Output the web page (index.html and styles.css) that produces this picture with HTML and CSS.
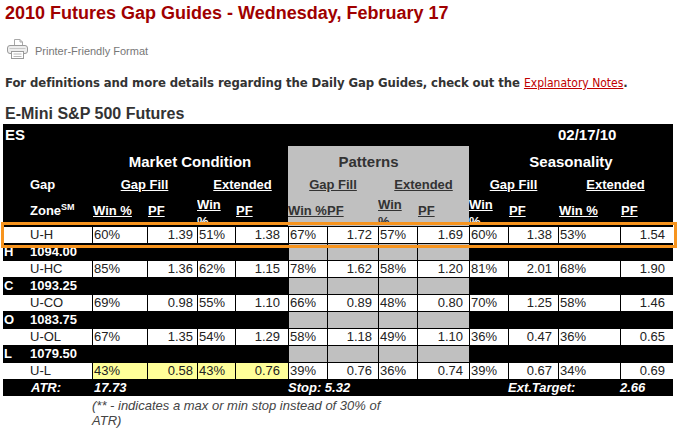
FILE: index.html
```html
<!DOCTYPE html>
<html>
<head>
<meta charset="utf-8">
<title>2010 Futures Gap Guides</title>
<link rel="stylesheet" href="styles.css">
</head>
<body>
<h1 class="title">2010 Futures Gap Guides - Wednesday, February 17</h1>
<div class="printer">
  <svg viewBox="0 0 21 20" aria-hidden="true">
    <path d="M7.5 0.5h5.5l2.5 2.5v5h-8z" fill="#fff" stroke="#a8a8a8"/>
    <path d="M13 0.5v2.5h2.5" fill="none" stroke="#a8a8a8"/>
    <rect x="0.5" y="6.5" width="20" height="8" rx="2.5" fill="#eeeeee" stroke="#9a9a9a"/>
    <path d="M2.5 9.5h16" stroke="#c8c8c8"/>
    <rect x="4.5" y="12.5" width="12" height="7" fill="#fff" stroke="#9a9a9a"/>
    <path d="M6.5 15h8M6.5 17.5h8" stroke="#b8b8b8"/>
  </svg>
  <span>Printer-Friendly Format</span>
</div>
<p class="intro">For definitions and more details regarding the Daily Gap Guides, check out the <a href="#">Explanatory Notes</a>.</p>
<h2 class="market">E-Mini S&amp;P 500 Futures</h2>
<div class="guide">
  <table class="gaps">
    <colgroup>
      <col style="width:24px"><col style="width:65px"><col style="width:55px"><col style="width:50px"><col style="width:38px"><col style="width:53px"><col style="width:39px"><col style="width:51px"><col style="width:39px"><col style="width:52px"><col style="width:39px"><col style="width:50px"><col style="width:62px"><col style="width:53px">
    </colgroup>
    <tr class="r-es">
      <td colspan="2" class="es">ES</td>
      <td colspan="10"></td>
      <td colspan="2" class="date">02/17/10</td>
    </tr>
    <tr class="r-mc">
      <td colspan="2"></td>
      <td colspan="4" class="grp">Market Condition</td>
      <td colspan="4" class="grp pat pat-title">Patterns</td>
      <td colspan="4" class="grp">Seasonality</td>
    </tr>
    <tr class="r-gf">
      <td></td>
      <td class="lbl">Gap</td>
      <td colspan="2" class="sub"><span class="u">Gap Fill</span></td>
      <td colspan="2" class="sub"><span class="u">Extended</span></td>
      <td colspan="2" class="sub pat"><span class="u">Gap Fill</span></td>
      <td colspan="2" class="sub pat"><span class="u">Extended</span></td>
      <td colspan="2" class="sub"><span class="u">Gap Fill</span></td>
      <td colspan="2" class="sub"><span class="u">Extended</span></td>
    </tr>
    <tr class="r-win">
      <td></td>
      <td class="lbl">Zone<sup>SM</sup></td>
      <td><span class="u">Win %</span></td>
      <td><span class="u">PF</span></td>
      <td class="w2"><div class="wrap"><span class="u">Win<br>%</span></div></td>
      <td><span class="u">PF</span></td>
      <td class="pat flush"><span class="u">Win %</span></td>
      <td class="pat flush"><span class="u">PF</span></td>
      <td class="pat w2"><div class="wrap"><span class="u">Win<br>%</span></div></td>
      <td class="pat"><span class="u">PF</span></td>
      <td class="w2"><div class="wrap"><span class="u">Win<br>%</span></div></td>
      <td><span class="u">PF</span></td>
      <td><span class="u">Win %</span></td>
      <td><span class="u">PF</span></td>
    </tr>
    <tr class="d">
      <td colspan="2" class="zone">U-H</td>
      <td>60%</td><td class="n n4">1.39</td><td>51%</td><td class="n n8">1.38</td>
      <td>67%</td><td class="n">1.72</td><td>57%</td><td class="n">1.69</td>
      <td>60%</td><td class="n">1.38</td><td>53%</td><td class="n n8">1.54</td>
    </tr>
    <tr class="lv">
      <td class="k">H</td><td class="kv">1094.00</td><td colspan="4"></td>
      <td class="g"></td><td class="g"></td><td class="g"></td><td class="g"></td>
      <td colspan="4"></td>
    </tr>
    <tr class="d">
      <td colspan="2" class="zone">U-HC</td>
      <td>85%</td><td class="n n4">1.36</td><td>62%</td><td class="n n8">1.15</td>
      <td>78%</td><td class="n">1.62</td><td>58%</td><td class="n">1.20</td>
      <td>81%</td><td class="n">2.01</td><td>68%</td><td class="n n8">1.90</td>
    </tr>
    <tr class="lv">
      <td class="k">C</td><td class="kv">1093.25</td><td colspan="4"></td>
      <td class="g"></td><td class="g"></td><td class="g"></td><td class="g"></td>
      <td colspan="4"></td>
    </tr>
    <tr class="d">
      <td colspan="2" class="zone">U-CO</td>
      <td>69%</td><td class="n n4">0.98</td><td>55%</td><td class="n n8">1.10</td>
      <td>66%</td><td class="n">0.89</td><td>48%</td><td class="n">0.80</td>
      <td>70%</td><td class="n">1.25</td><td>58%</td><td class="n n8">1.46</td>
    </tr>
    <tr class="lv">
      <td class="k">O</td><td class="kv">1083.75</td><td colspan="4"></td>
      <td class="g"></td><td class="g"></td><td class="g"></td><td class="g"></td>
      <td colspan="4"></td>
    </tr>
    <tr class="d">
      <td colspan="2" class="zone">U-OL</td>
      <td>67%</td><td class="n n4">1.35</td><td>54%</td><td class="n n8">1.29</td>
      <td>58%</td><td class="n">1.18</td><td>49%</td><td class="n">1.10</td>
      <td>36%</td><td class="n">0.47</td><td>36%</td><td class="n n8">0.65</td>
    </tr>
    <tr class="lv">
      <td class="k">L</td><td class="kv">1079.50</td><td colspan="4"></td>
      <td class="g"></td><td class="g"></td><td class="g"></td><td class="g"></td>
      <td colspan="4"></td>
    </tr>
    <tr class="d">
      <td colspan="2" class="zone">U-L</td>
      <td class="hl">43%</td><td class="n n4 hl">0.58</td><td class="hl">43%</td><td class="n n8 hl">0.76</td>
      <td>39%</td><td class="n">0.76</td><td>36%</td><td class="n">0.74</td>
      <td>39%</td><td class="n">0.67</td><td>34%</td><td class="n n8">0.69</td>
    </tr>
    <tr class="atr">
      <td></td>
      <td class="lbl">ATR:</td>
      <td colspan="4" class="v">17.73</td>
      <td colspan="4">Stop: 5.32</td>
      <td></td>
      <td colspan="2">Ext.Target:</td>
      <td>2.66</td>
    </tr>
  </table>
  <div class="focus"></div>
</div>
<p class="note">(** - indicates a max or min stop instead of 30% of ATR)</p>
</body>
</html>
```

FILE: styles.css
```css
* {
  box-sizing: border-box;
}

body {
  margin: 0;
  padding: 3px 0 0 3px;
  background: #fff;
  color: #333;
  font-family: "Liberation Sans", Arial, sans-serif;
}

.title {
  margin: 0;
  padding-left: 2px;
  font-size: 18px;
  line-height: 21px;
  font-weight: bold;
  color: #a00000;
  white-space: nowrap;
}

.printer {
  display: flex;
  align-items: center;
  gap: 7px;
  height: 20px;
  margin-top: 15px;
  padding-left: 4px;
  font-size: 11px;
  color: #777;
}

.printer svg {
  display: block;
  width: 21px;
  height: 20px;
}

.printer span {
  margin-top: 4px;
}

.intro {
  margin: 16px 0 0;
  padding-left: 2px;
  font-family: "DejaVu Sans Condensed", "DejaVu Sans", sans-serif;
  font-stretch: condensed;
  font-weight: bold;
  font-size: 13px;
  line-height: 15px;
  letter-spacing: -0.08px;
  color: #333;
  white-space: nowrap;
}

.intro a {
  font-weight: normal;
  font-size: 12px;
  letter-spacing: 0;
  color: #c00000;
  text-decoration: underline;
}

.market {
  margin: 14px 0 1px;
  padding-left: 2px;
  font-size: 16px;
  line-height: 18px;
  font-weight: bold;
  color: #333;
}

.guide {
  position: relative;
  width: 670px;
}

.gaps {
  width: 670px;
  table-layout: fixed;
  border-collapse: separate;
  border-spacing: 0;
  background: #000;
  font-size: 13px;
}

.gaps td {
  padding: 0;
  white-space: nowrap;
}

.u {
  text-decoration: underline;
}

.pat {
  background: #c0c0c0;
}

/* ES row */
.r-es {
  height: 22px;
}

.r-es td {
  color: #fff;
  font-weight: bold;
  font-size: 15px;
  line-height: 18px;
  vertical-align: middle;
}

.r-es .es {
  padding-left: 2px;
}

/* group titles */
.r-mc {
  height: 27px;
}

.r-mc td {
  vertical-align: middle;
}

.gaps td.grp {
  padding-top: 5px;
  text-align: center;
  color: #fff;
  font-weight: bold;
  font-size: 15px;
  line-height: 18px;
}

.gaps td.grp.pat {
  color: #333;
}

.gaps td.pat-title {
  padding-right: 20px;
}

/* Gap Fill / Extended row */
.r-gf {
  height: 23px;
}

.r-gf td {
  vertical-align: middle;
  color: #fff;
  font-weight: bold;
  line-height: 17px;
}

.r-gf td.sub {
  text-align: center;
}

.r-gf td.pat {
  color: #333;
}

.gaps td.lbl {
  padding-left: 3px;
}

/* Win % / PF row */
.r-win {
  height: 30px;
}

.r-win td {
  vertical-align: top;
  padding: 6px 0 0 1px;
  color: #fff;
  font-weight: bold;
  line-height: 17px;
}

.r-win td.pat {
  color: #333;
}

.r-win td.flush {
  padding-left: 0;
}

.r-win td.w2 {
  padding: 0;
}

.wrap {
  height: 29px;
  overflow: hidden;
}

.r-win sup {
  font-size: 9px;
  line-height: 0;
  vertical-align: 5px;
}

/* data rows */
.d td {
  background: #fff;
  color: #222;
  border-top: 1px solid #000;
  border-left: 1px solid #000;
  line-height: 16px;
  padding: 0 0 0 1px;
}

.d td.zone {
  border-left: 0;
  padding-left: 27px;
}

.d td.n {
  text-align: right;
  padding: 0 6px 0 0;
}

.d td.n4 {
  padding-right: 4px;
}

.d td.n8 {
  padding-right: 8px;
}

.d td.hl {
  background: #ffff99;
}

/* level rows */
.lv td {
  border-top: 1px solid #000;
  line-height: 16px;
  color: #fff;
  font-weight: bold;
}

.lv td.k {
  padding-left: 1px;
}

.lv td.kv {
  padding-left: 3px;
}

.lv td.g {
  background: #c0c0c0;
  border-left: 1px solid #000;
}

/* ATR row */
.atr td {
  border-top: 1px solid #000;
  line-height: 16px;
  color: #fff;
  font-weight: bold;
  font-style: italic;
}

.atr td.lbl {
  padding-left: 4px;
}

.atr td.v {
  padding-left: 2px;
}

/* highlight box */
.focus {
  position: absolute;
  left: -2px;
  top: 98px;
  width: 676px;
  height: 26px;
  border: 3px solid #f7941e;
  pointer-events: none;
}

.note {
  margin: 2px 0 0 89px;
  width: 300px;
  font-style: italic;
  font-size: 13px;
  line-height: 15px;
  color: #444;
}
```
